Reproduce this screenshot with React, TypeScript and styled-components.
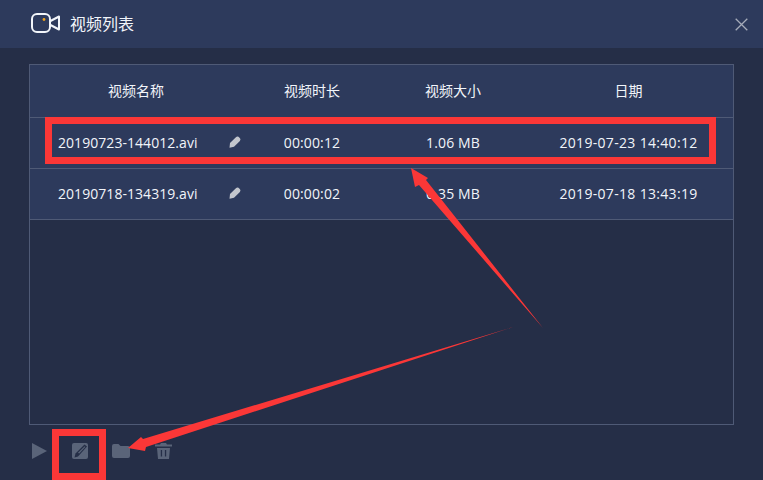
import React from 'react';
import styled, { createGlobalStyle } from 'styled-components';

const GlobalStyle = createGlobalStyle`
  html, body {
    margin: 0;
    padding: 0;
    background: #252e47;
  }
`;

const Window = styled.div`
  position: relative;
  width: 763px;
  height: 480px;
  overflow: hidden;
  display: flex;
  flex-direction: column;
  background: #252e47;
  color: #f2f5fa;
  font-family: 'Open Sans', 'Noto Sans CJK SC', sans-serif;
  font-size: 14px;
`;

const TitleBar = styled.div`
  display: flex;
  align-items: center;
  height: 48px;
  padding: 0 15px 0 31px;
  background: #2d3a5c;
`;

const Title = styled.span`
  margin-left: 9px;
  padding-bottom: 2px;
  font-family: 'Noto Sans CJK SC', sans-serif;
  font-size: 16px;
  flex: 1;
`;

const Body = styled.div`
  display: flex;
  flex-direction: column;
  padding: 16px 29px 0;
`;

const Table = styled.div`
  height: 361px;
  border: 1px solid #4f5a76;
  box-sizing: border-box;
`;

const Row = styled.div<{ $head?: boolean }>`
  display: grid;
  grid-template-columns: 212px 140px 142px 1fr;
  align-items: center;
  box-sizing: content-box;
  height: ${({ $head }) => ($head ? '50px' : '48px')};
  padding-bottom: 2px;
  background: #2d3a5c;
  border-bottom: 1px solid #4f5a76;
`;

const HeadCell = styled.div`
  text-align: center;
  font-family: 'Noto Sans CJK SC', sans-serif;
  font-size: 14px;
`;

const Cell = styled.div<{ $wide?: boolean }>`
  text-align: center;
  letter-spacing: ${({ $wide }) => ($wide ? '0.32px' : '0.12px')};
`;

const NameCell = styled.div`
  display: flex;
  align-items: center;
  padding-left: 28px;
  letter-spacing: 0.05px;
`;

const FileName = styled.span`
  width: 171px;
`;

const Toolbar = styled.div`
  display: flex;
  align-items: center;
  gap: 24.5px;
  height: 52px;
  padding-left: 3px;
`;

const ToolIcon = styled.svg`
  fill: #5a6479;
  flex: none;
`;

const RedBox = styled.div<{ $x: number; $y: number; $w: number; $h: number }>`
  position: absolute;
  left: ${({ $x }) => $x}px;
  top: ${({ $y }) => $y}px;
  width: ${({ $w }) => $w}px;
  height: ${({ $h }) => $h}px;
  box-sizing: border-box;
  border: 7px solid #fb3737;
`;

const ArrowLayer = styled.svg`
  position: absolute;
  left: 0;
  top: 0;
  width: 763px;
  height: 480px;
  pointer-events: none;
`;

const rows = [
  { name: '20190723-144012.avi', time: '00:00:12', size: '1.06 MB', date: '2019-07-23 14:40:12' },
  { name: '20190718-134319.avi', time: '00:00:02', size: '0.35 MB', date: '2019-07-18 13:43:19' },
];

const Pencil = () => (
  <svg width="12" height="12" viewBox="0 0 12 12">
    <path
      d="M.5 11.700 1 7 6.900 1.200Q8.100 0 9.500.8L11 2.200Q12 3.600 10.900 4.900L5 10.800Z"
      fill="#c3c6cd"
    />
  </svg>
);

export default function App() {
  return (
    <Window>
      <GlobalStyle />
      <TitleBar>
        <svg width="30" height="22" viewBox="0 0 30 22" fill="none">
          <rect x="1" y="1" width="18" height="18" rx="5" stroke="#f2f5fa" strokeWidth="2" />
          <circle cx="13" cy="6.500" r="1.400" fill="#f0a41e" />
          <path d="M19.500 8 28 3.500V16.500L19.500 12" stroke="#f2f5fa" strokeWidth="2" strokeLinejoin="round" />
        </svg>
        <Title>视频列表</Title>
        <svg width="13" height="13" viewBox="0 0 13 13" fill="none">
          <path d="M.7.7 12.300 12.300M12.300.7.7 12.300" stroke="#a5abb9" strokeWidth="1.300" />
        </svg>
      </TitleBar>
      <Body>
        <Table>
          <Row $head>
            <HeadCell>视频名称</HeadCell>
            <HeadCell>视频时长</HeadCell>
            <HeadCell>视频大小</HeadCell>
            <HeadCell>日期</HeadCell>
          </Row>
          {rows.map((r) => (
            <Row key={r.name}>
              <NameCell>
                <FileName>{r.name}</FileName>
                <Pencil />
              </NameCell>
              <Cell>{r.time}</Cell>
              <Cell>{r.size}</Cell>
              <Cell $wide>{r.date}</Cell>
            </Row>
          ))}
        </Table>
        <Toolbar>
          <ToolIcon width="15" height="16" viewBox="0 0 15 16">
            <path d="M0 0 15 8 0 16Z" />
          </ToolIcon>
          <ToolIcon width="16" height="16" viewBox="0 0 16 16">
            <rect width="16" height="16" rx="2" />
            <path d="M12.500 1.500 15 3.500 6 13.500 2.500 14.500 3.500 10.500Z" fill="#252e47" />
            <path d="M12.700 3.300 13.300 3.900 7.200 10.600 6 9.800Z" />
          </ToolIcon>
          <ToolIcon width="18" height="14" viewBox="0 0 18 14">
            <path d="M0 2a2 2 0 0 1 2-2h4.500l2 2H16a2 2 0 0 1 2 2v8a2 2 0 0 1-2 2H2a2 2 0 0 1-2-2Z" />
          </ToolIcon>
          <ToolIcon width="17" height="16" viewBox="0 0 17 16">
            <path d="M6 0h5l1 1.500h5v2H0v-2h5ZM2 5h13l-1 11H3Z" />
            <path d="M5.800 7h1.300v6.500H5.800ZM9.900 7h1.300v6.500H9.900Z" fill="#252e47" />
          </ToolIcon>
        </Toolbar>
      </Body>
      <RedBox $x={45} $y={117} $w={671} $h={47} />
      <RedBox $x={52} $y={429} $w={54} $h={51} />
      <ArrowLayer viewBox="0 0 763 480">
        <polygon points="411,168 428,178 426,180 543,328 419,185 415,187" fill="#fb3737" />
        <polygon points="513,327 143,439 141,437 128,448 145,451 146,447" fill="#fb3737" />
      </ArrowLayer>
    </Window>
  );
}
